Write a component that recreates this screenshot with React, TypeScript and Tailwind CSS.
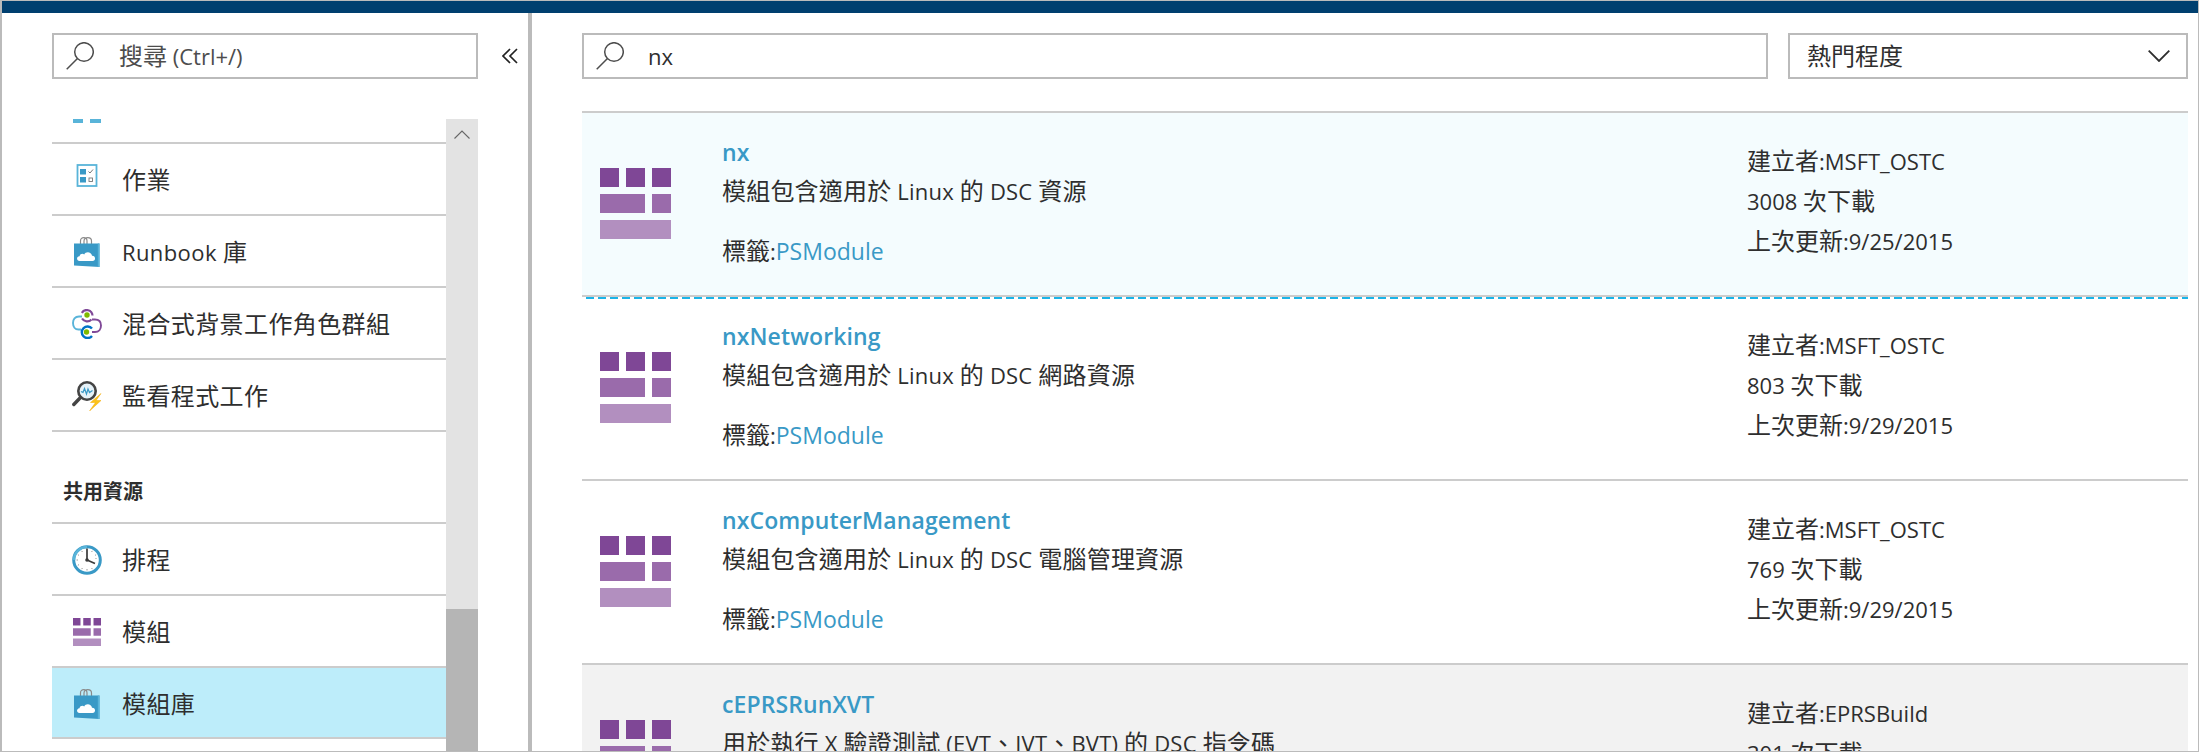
import React from "react";

const CJK = /([\u3000-\u30ff\u3400-\u9fff\uff00-\uffef]+)/;

function T({ s }: { s: string }) {
  return (
    <>
      {s.split(CJK).map((part, i) =>
        CJK.test(part) ? (
          <span key={i} className="text-[24px]">{part}</span>
        ) : (
          <span key={i}>{part}</span>
        )
      )}
    </>
  );
}

function SearchIcon() {
  return (
    <svg width="28" height="28" viewBox="0 0 28 28" fill="none" stroke="#4d4d4d" strokeWidth="1.500" className="shrink-0">
      <circle cx="18" cy="10" r="9.300" />
      <path d="M11.500 16.500L0.700 27.300" />
    </svg>
  );
}

function ModuleIcon({ size = 71 }: { size?: number }) {
  return (
    <svg width={size} height={size} viewBox="0 0 71 71" className="shrink-0">
      <rect x="0" y="0" width="19" height="19" fill="#7f4796" />
      <rect x="26" y="0" width="19" height="19" fill="#7f4796" />
      <rect x="52" y="0" width="19" height="19" fill="#7f4796" />
      <rect x="0" y="26" width="45" height="19" fill="#9a6bab" />
      <rect x="52" y="26" width="19" height="19" fill="#9a6bab" />
      <rect x="0" y="52" width="71" height="19" fill="#b28fbf" />
    </svg>
  );
}

function BagIcon() {
  return (
    <svg width="30" height="30" viewBox="0 0 30 30" className="shrink-0">
      <path d="M8.500 8V4C8.500 1.500 10 0.700 11.800 0.700S15 1.500 15 4V8M12 8V4C12 1.500 13.800 0.700 15.800 0.700S19.500 1.500 19.500 4V8" fill="none" stroke="#8a8a8a" strokeWidth="1.200" />
      <path d="M2 6.500H27.500V30L2 28.500Z" fill="#3999c6" />
      <path d="M25.800 6.500H27.500V30L25.800 29.700Z" fill="#59b4d9" />
      <path d="M7.500 24C4.500 24 4 19.500 7.500 19.200C8 16.800 11 16.200 12.200 17.600C13.500 14 19.500 14.500 20 18.800C24 18.600 24 24 20.500 24Z" fill="#fff" />
    </svg>
  );
}

function JobsIcon() {
  return (
    <svg width="30" height="24" viewBox="0 0 30 24" className="mb-[8px] shrink-0">
      <rect x="5.500" y="1" width="19" height="21" fill="#fff" stroke="#59b4d9" strokeWidth="1.800" />
      <rect x="8" y="5" width="6" height="5.500" fill="#3999c6" />
      <rect x="8" y="13" width="6" height="5.500" fill="#3999c6" />
      <path d="M16.500 7.500L18 9L21 5.500" fill="none" stroke="#666" strokeWidth="0.900" />
      <rect x="17" y="14" width="3.500" height="3.500" fill="none" stroke="#777" strokeWidth="0.900" />
    </svg>
  );
}

function HybridIcon() {
  return (
    <svg width="30" height="30" viewBox="0 0 30 30" fill="none" className="shrink-0">
      <path d="M10 7.500H7C3 7.500 1 10.500 1 14S3 20.500 6.500 20.500H9" stroke="#59b4d9" strokeWidth="1.900" />
      <path d="M20 10.500H23C27 10.500 29 13 29 16.500S27 23 23 23H20" stroke="#804998" strokeWidth="1.900" />
      <path d="M9.800 3.800A5.800 5.800 0 0 1 20.500 6.500" stroke="#804998" strokeWidth="2.200" />
      <path d="M10 9.500A6 6 0 0 0 19.500 10.500" stroke="#804998" strokeWidth="2.200" />
      <path d="M20 19.500A5.800 5.800 0 1 0 20 27" stroke="#0072c6" strokeWidth="2.400" />
      <circle cx="15" cy="6" r="2.700" fill="#7fba00" />
      <circle cx="14.500" cy="23" r="2.700" fill="#7fba00" />
    </svg>
  );
}

function MonitorIcon() {
  return (
    <svg width="30" height="30" viewBox="0 0 30 30" fill="none" className="shrink-0">
      <circle cx="15" cy="10" r="8.700" fill="#e6f2f8" stroke="#444" strokeWidth="2.600" />
      <path d="M8.500 16.500L1.800 23.500" stroke="#444" strokeWidth="3.400" strokeLinecap="round" />
      <path d="M9 10.500L11 11.500L12.500 7.500L14.500 13L16 8L17.500 11.500L20.500 9.500" stroke="#3999c6" strokeWidth="1.200" />
      <path d="M29 12.500L18.500 21.500H23.500L17.500 30L29 19.500H24Z" fill="#fcc419" stroke="#f2a900" strokeWidth="0.500" />
    </svg>
  );
}

function ClockIcon() {
  return (
    <svg width="30" height="30" viewBox="0 0 30 30" className="shrink-0">
      <circle cx="15" cy="15" r="13.300" fill="#fff" stroke="#3999c6" strokeWidth="3" />
      <path d="M2 15A13 13 0 0 1 15 2" fill="none" stroke="#59b4d9" strokeWidth="2.600" />
      <path d="M15 3.500V15L23 18.500" fill="none" stroke="#3a3a3a" strokeWidth="1.700" />
      <circle cx="15" cy="15" r="1.800" fill="#3a3a3a" />
      <path d="M15 24V25.500M4.500 15H6M24 13V14M9.700 5.900L10.400 7M20.300 5.900L19.600 7M5.900 9.700L7 10.400M24.100 9.700L23 10.400M5.900 20.300L7 19.600M9.700 24.100L10.400 23M20.300 24.100L19.600 23" stroke="#999" strokeWidth="1" />
    </svg>
  );
}

function NavRow({ icon, label, selected, last }: { icon: React.ReactNode; label: string; selected?: boolean; last?: boolean }) {
  return (
    <div
      className={
        "flex shrink-0 items-center gap-[20px] border-b-2 border-[#cccccc] pl-[20px] pt-[2px] text-[#2e2e2e] " +
        (last ? "h-[71px] " : "h-[72px] ") +
        (selected ? "bg-[#bdedfa]" : "bg-white")
      }
    >
      <span className="flex w-[30px] justify-center">{icon}</span>
      <span className="text-[22px] tracking-[0.4px]"><T s={label} /></span>
    </div>
  );
}

function Sidebar() {
  return (
    <div className="flex h-full w-[530px] shrink-0 flex-col border-r-4 border-[#bbbbbb] pl-[50px]">
      <div className="mt-[20px] flex h-[46px] shrink-0 items-center">
        <div className="flex h-full w-[426px] shrink-0 items-center gap-[25px] border-2 border-[#bbbbbb] pl-[12px] text-[#4d4d4d]">
          <SearchIcon />
          <span className="text-[22px]"><T s="搜尋 (Ctrl+/)" /></span>
        </div>
        <svg width="16" height="16" viewBox="0 0 16 16" fill="none" stroke="#222" strokeWidth="1.700" className="ml-[24px] shrink-0">
          <path d="M8 1L1 8L8 15M15 1L8 8L15 15" />
        </svg>
      </div>
      <div className="mt-[40px] flex min-h-0 w-[426px] flex-1">
        <div className="flex min-w-0 flex-1 flex-col overflow-hidden">
          <div className="flex h-[25px] shrink-0 gap-[7px] border-b-2 border-[#cccccc] pl-[21px]">
            <span className="h-[4px] w-[10px] bg-[#59b4d9]" />
            <span className="h-[4px] w-[11px] bg-[#59b4d9]" />
          </div>
          <NavRow icon={<JobsIcon />} label="作業" />
          <NavRow icon={<BagIcon />} label="Runbook 庫" />
          <NavRow icon={<HybridIcon />} label="混合式背景工作角色群組" />
          <NavRow icon={<MonitorIcon />} label="監看程式工作" />
          <div className="flex h-[92px] shrink-0 items-end border-b-2 border-[#cccccc] pb-[18px] pl-[11px] text-[20px] font-bold leading-[24px] text-[#2e2e2e]">
            共用資源
          </div>
          <NavRow icon={<ClockIcon />} label="排程" />
          <NavRow icon={<ModuleIcon size={28} />} label="模組" />
          <NavRow icon={<BagIcon />} label="模組庫" selected last />
        </div>
        <div className="flex w-[32px] shrink-0 flex-col bg-[#e3e3e3]">
          <div className="flex h-[490px] items-start justify-center pt-[11px]">
            <svg width="16" height="9" viewBox="0 0 16 9" fill="none" stroke="#666" strokeWidth="1.100">
              <path d="M0.500 8.500L8 1L15.500 8.500" />
            </svg>
          </div>
          <div className="flex-1 bg-[#b5b5b5]" />
        </div>
      </div>
    </div>
  );
}

type Item = {
  title: string;
  desc: string;
  author: string;
  downloads: string;
  updated: string;
};

const items: Item[] = [
  { title: "nx", desc: "模組包含適用於 Linux 的 DSC 資源", author: "MSFT_OSTC", downloads: "3008", updated: "9/25/2015" },
  { title: "nxNetworking", desc: "模組包含適用於 Linux 的 DSC 網路資源", author: "MSFT_OSTC", downloads: "803", updated: "9/29/2015" },
  { title: "nxComputerManagement", desc: "模組包含適用於 Linux 的 DSC 電腦管理資源", author: "MSFT_OSTC", downloads: "769", updated: "9/29/2015" },
  { title: "cEPRSRunXVT", desc: "用於執行 X 驗證測試 (EVT、IVT、BVT) 的 DSC 指令碼", author: "EPRSBuild", downloads: "301", updated: "9/29/2015" },
];

function ResultRow({ item, tone }: { item: Item; tone: "selected" | "plain" | "hover" }) {
  return (
    <div
      className={
        "relative flex h-[184px] shrink-0 border-b-2 border-[#cccccc] text-[22px] text-[#2e2e2e] " +
        (tone === "selected" ? "bg-[#f4fcfe]" : tone === "hover" ? "bg-[#f2f2f2]" : "bg-white")
      }
    >
      <div className="w-[140px] shrink-0 pl-[18px] pt-[55px]">
        <ModuleIcon />
      </div>
      <div className="min-w-0 flex-1 pt-[20px] leading-[38px]">
        <div className="text-[23px] font-semibold tracking-[0.1px] text-[#3999c6]">{item.title}</div>
        <div className="mt-[1px] tracking-[0.2px]"><T s={item.desc} /></div>
        <div className="mt-[22px]">
          <T s="標籤:" />
          <span className="text-[23px] text-[#3999c6]">PSModule</span>
        </div>
      </div>
      <div className="w-[441px] shrink-0 pt-[28px] leading-[39px]">
        <div><T s={"建立者:" + item.author} /></div>
        <div><T s={item.downloads + " 次下載"} /></div>
        <div><T s={"上次更新:" + item.updated} /></div>
      </div>
      {tone === "selected" && (
        <div className="absolute bottom-[-4px] left-0 right-0 z-10 h-[2px] bg-[repeating-linear-gradient(90deg,transparent_0,transparent_4px,#1bb4e8_4px,#1bb4e8_12px)]" />
      )}
    </div>
  );
}

function Main() {
  return (
    <div className="flex h-full min-w-0 flex-1 flex-col pl-[50px] pr-[10px]">
      <div className="mt-[20px] flex h-[46px] shrink-0 gap-[20px]">
        <div className="flex flex-1 items-center gap-[24px] border-2 border-[#bbbbbb] pl-[12px] text-[#2e2e2e]">
          <SearchIcon />
          <span className="text-[22px]">nx</span>
        </div>
        <div className="flex w-[400px] shrink-0 items-center justify-between border-2 border-[#bbbbbb] pl-[17px] pr-[16px] text-[#2e2e2e]">
          <span className="text-[24px]">熱門程度</span>
          <svg width="22" height="12" viewBox="0 0 22 12" fill="none" stroke="#2e2e2e" strokeWidth="1.800">
            <path d="M0.700 0.700L11 11L21.300 0.700" />
          </svg>
        </div>
      </div>
      <div className="mt-[32px] flex min-h-0 flex-1 flex-col overflow-hidden border-t-2 border-[#cccccc]">
        <ResultRow item={items[0]} tone="selected" />
        <ResultRow item={items[1]} tone="plain" />
        <ResultRow item={items[2]} tone="plain" />
        <ResultRow item={items[3]} tone="hover" />
      </div>
    </div>
  );
}

export default function App() {
  return (
    <div className="flex h-[752px] w-[2199px] flex-col overflow-hidden border-y border-l-2 border-r border-[#bbbbbb] bg-white font-['Open_Sans','Noto_Sans_CJK_TC',sans-serif]">
      <div className="h-[12px] shrink-0 bg-[#003f6f]" />
      <div className="flex min-h-0 flex-1">
        <Sidebar />
        <Main />
      </div>
    </div>
  );
}
